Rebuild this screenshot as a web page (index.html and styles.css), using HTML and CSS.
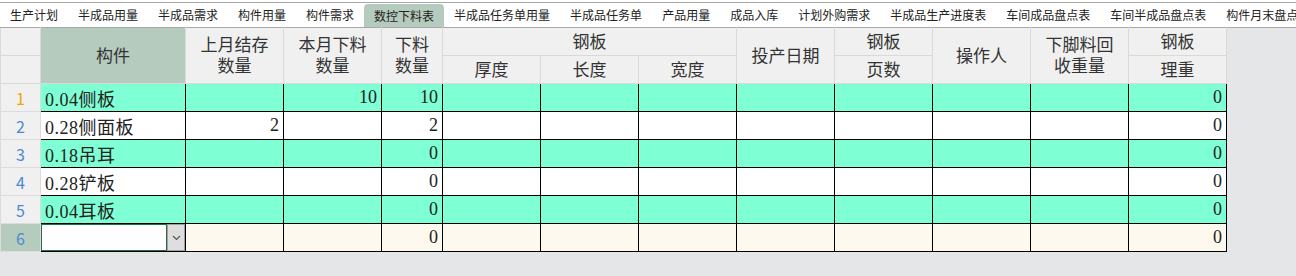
FILE: index.html
```html
<!DOCTYPE html>
<html>
<head>
    <meta charset="utf-8">
    <link rel="stylesheet" href="styles.css">
</head>
<body>
    <div class="topBar">
        <div class="tabs">
            <span class="tab">生产计划</span>
            <span class="tab">半成品用量</span>
            <span class="tab">半成品需求</span>
            <span class="tab">构件用量</span>
            <span class="tab">构件需求</span>
            <span class="tab active">数控下料表</span>
            <span class="tab">半成品任务单用量</span>
            <span class="tab">半成品任务单</span>
            <span class="tab">产品用量</span>
            <span class="tab">成品入库</span>
            <span class="tab">计划外购需求</span>
            <span class="tab">半成品生产进度表</span>
            <span class="tab">车间成品盘点表</span>
            <span class="tab">车间半成品盘点表</span>
            <span class="tab">构件月末盘点表</span>
        </div>
    </div>

    <table class="sheet">
        <colgroup>
            <col class="colRow">
            <col class="colName">
            <col class="colStd">
            <col class="colStd">
            <col class="colNarrow">
            <col class="colStd">
            <col class="colStd">
            <col class="colStd">
            <col class="colStd">
            <col class="colStd">
            <col class="colStd">
            <col class="colStd">
            <col class="colStd">
        </colgroup>
        <thead>
            <tr>
                <th class="corner"></th>
                <th rowspan="2" class="selected">构件</th>
                <th rowspan="2">上月结存<br>数量</th>
                <th rowspan="2">本月下料<br>数量</th>
                <th rowspan="2">下料<br>数量</th>
                <th colspan="3">钢板</th>
                <th rowspan="2">投产日期</th>
                <th>钢板</th>
                <th rowspan="2">操作人</th>
                <th rowspan="2">下脚料回<br>收重量</th>
                <th>钢板</th>
            </tr>
            <tr>
                <th class="corner"></th>
                <th>厚度</th>
                <th>长度</th>
                <th>宽度</th>
                <th>页数</th>
                <th>理重</th>
            </tr>
        </thead>
        <tbody>
            <tr class="mint">
                <td class="rowNum current">1</td>
                <td class="name">0.04侧板</td>
                <td></td><td>10</td><td>10</td>
                <td></td><td></td><td></td><td></td><td></td><td></td><td></td><td>0</td>
            </tr>
            <tr class="plain">
                <td class="rowNum">2</td>
                <td class="name">0.28侧面板</td>
                <td>2</td><td></td><td>2</td>
                <td></td><td></td><td></td><td></td><td></td><td></td><td></td><td>0</td>
            </tr>
            <tr class="mint">
                <td class="rowNum">3</td>
                <td class="name">0.18吊耳</td>
                <td></td><td></td><td>0</td>
                <td></td><td></td><td></td><td></td><td></td><td></td><td></td><td>0</td>
            </tr>
            <tr class="plain">
                <td class="rowNum">4</td>
                <td class="name">0.28铲板</td>
                <td></td><td></td><td>0</td>
                <td></td><td></td><td></td><td></td><td></td><td></td><td></td><td>0</td>
            </tr>
            <tr class="mint">
                <td class="rowNum">5</td>
                <td class="name">0.04耳板</td>
                <td></td><td></td><td>0</td>
                <td></td><td></td><td></td><td></td><td></td><td></td><td></td><td>0</td>
            </tr>
            <tr class="newRow">
                <td class="rowNum selected">6</td>
                <td class="name editing">
                    <div class="combo">
                        <div class="comboBox"></div>
                        <div class="comboButton">
                            <svg width="9" height="6" viewBox="0 0 9 6"><path d="M1 1 L4.5 4.5 L8 1" fill="none" stroke="#555" stroke-width="1.2"/></svg>
                        </div>
                    </div>
                </td>
                <td></td><td></td><td>0</td>
                <td></td><td></td><td></td><td></td><td></td><td></td><td></td><td>0</td>
            </tr>
        </tbody>
    </table>
</body>
</html>
```

FILE: styles.css
```css
body {
    margin: 0;
    padding: 0;
    background-color: #e5e6e8;
    font-family: "Noto Sans CJK SC", sans-serif;
    overflow: hidden;
}

.topBar {
    background-color: #fff;
    padding-top: 2px;
}

.tabs {
    display: flex;
    height: 24px;
    border-top: 1px solid #a8a8a8;
    border-bottom: 1px solid #a8a8a8;
    background-color: #fff;
    white-space: nowrap;
    overflow: hidden;
    font-size: 12px;
    color: #222;
}

.tab {
    flex: none;
    padding: 0 10px;
    line-height: 24px;
}

.tab.active {
    margin-top: 1px;
    line-height: 23px;
    background-color: #b5cbbd;
    border-radius: 4px 4px 0 0;
}

/* sheet grid */
.sheet {
    margin-top: -1px;
    border-collapse: collapse;
    table-layout: fixed;
    width: 1227px;
}

.colRow { width: 40px; }
.colName { width: 145px; }
.colStd { width: 98px; }
.colNarrow { width: 61px; }

.sheet th {
    height: 24px;
    padding: 0 0 3px 0;
    border: 1px solid #d9d9d9;
    border-top-color: #a8a8a8;
    background-color: #f0f0f0;
    color: #333;
    font-size: 17px;
    font-weight: normal;
    line-height: 21px;
    text-align: center;
}

.sheet tr + tr th {
    border-top-color: #d9d9d9;
}

.sheet th.selected {
    background-color: #b5cbbd;
}

.sheet td {
    height: 27px;
    padding: 0 4px;
    border: 1px solid #000;
    color: #222;
    font-family: "Liberation Serif", "Noto Sans CJK SC", serif;
    font-size: 18px;
    text-align: right;
    white-space: nowrap;
    overflow: hidden;
}

.sheet td.name {
    text-align: left;
    letter-spacing: 0.5px;
}

.sheet td.rowNum {
    padding: 0;
    border: 1px solid #dcdcdc;
    background-color: #f0f0f0;
    color: #4a8bd3;
    font-family: "Noto Sans CJK SC", sans-serif;
    font-size: 16px;
    text-align: center;
}

.sheet td.rowNum.current {
    color: #f5a300;
}

.sheet td.rowNum.selected {
    background-color: #b5cbbd;
}

.mint td {
    background-color: #7fffd4;
}

.plain td {
    background-color: #fff;
}

.newRow td {
    background-color: #fdf9ef;
}

.sheet td.editing {
    padding: 0;
    background-color: #fff;
}

.combo {
    display: flex;
    height: 27px;
}

.comboBox {
    flex: 1;
    border: 1px solid #2c6b48;
    background-color: #fff;
}

.comboButton {
    width: 16px;
    display: flex;
    align-items: center;
    justify-content: center;
    border: 1px solid #a0a0a0;
    background-color: #dedede;
}
```
